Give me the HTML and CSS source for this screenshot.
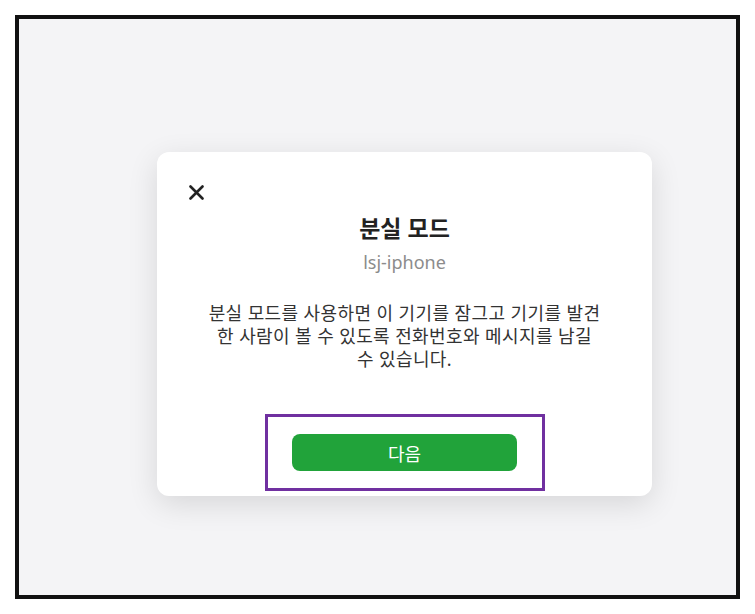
FILE: index.html
```html
<!DOCTYPE html>
<html lang="ko">
<head>
    <meta charset="UTF-8">
    <meta name="viewport" content="width=device-width, initial-scale=1.0">
    <title>분실 모드</title>
    <link rel="stylesheet" href="styles.css">
</head>
<body>

    <div class="frame">
        <div class="modal">
            <button class="close" aria-label="닫기">
                <svg width="15" height="15" viewBox="0 0 15 15">
                    <path d="M1.5 1.5 L13.5 13.5 M13.5 1.5 L1.5 13.5" stroke="#222" stroke-width="2.6" stroke-linecap="round"/>
                </svg>
            </button>

            <h2 class="title">분실 모드</h2>
            <p class="device">lsj-iphone</p>

            <p class="desc">
                분실 모드를 사용하면 이 기기를 잠그고 기기를 발견<br>
                한 사람이 볼 수 있도록 전화번호와 메시지를 남길<br>
                수 있습니다.
            </p>

            <div class="highlight">
                <button class="next">다음</button>
            </div>
        </div>
    </div>

</body>
</html>
```

FILE: styles.css
```css
body {
    margin: 0;
    background-color: #fff;
    font-family: "Noto Sans", "Noto Sans CJK KR", sans-serif;
}
.frame {
    margin: 15px;
    height: 584px;
    border: 4px solid #111;
    background-color: #f4f4f6;
    padding: 133px 0 0 138px;
    box-sizing: border-box;
}
.modal {
    width: 495px;
    background-color: #fff;
    border-radius: 12px;
    box-shadow: 0 8px 30px rgba(0, 0, 0, 0.12);
    padding: 30px 29px 5px;
    box-sizing: border-box;
    text-align: center;
}
.close {
    display: block;
    width: 21px;
    height: 21px;
    padding: 3px;
    border: none;
    background: none;
    cursor: pointer;
}
.close svg {
    display: block;
}
.title {
    margin: 11px 0 0;
    font-size: 23px;
    line-height: 28px;
    font-weight: bold;
    color: #222;
}
.device {
    margin: 8px 0 0;
    font-size: 18px;
    line-height: 24px;
    color: #8c8c8c;
}
.desc {
    margin: 28px 0 0;
    font-size: 18px;
    line-height: 23px;
    letter-spacing: 0.4px;
    color: #333;
}
.highlight {
    width: 280px;
    margin: 43px auto 0;
    padding: 17px 0;
    border: 3px solid #7030a0;
    box-sizing: border-box;
}
.next {
    display: block;
    width: 225px;
    height: 37px;
    margin: 0 auto;
    border: none;
    border-radius: 8px;
    background-color: #21a33a;
    color: #fff;
    font-family: "Noto Sans", "Noto Sans CJK KR", sans-serif;
    font-size: 18px;
    cursor: pointer;
}
```
